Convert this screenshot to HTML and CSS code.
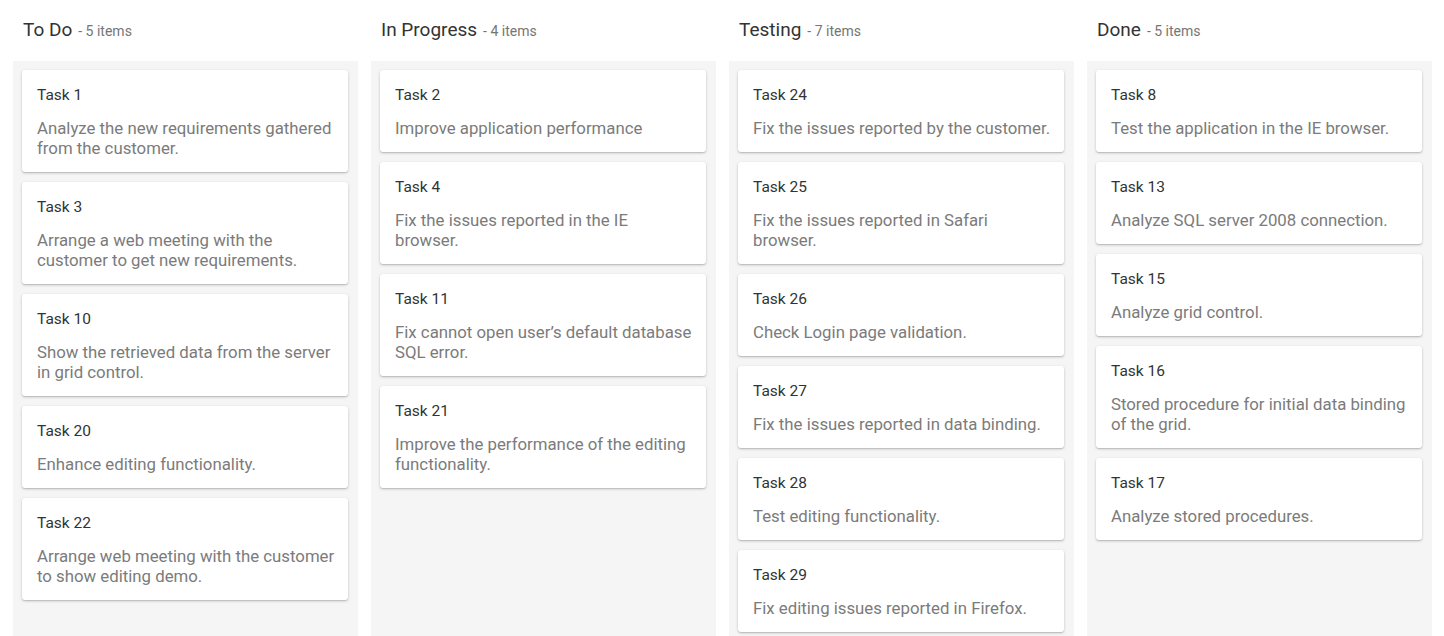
FILE: index.html
```html
<!doctype html>
<html lang="en">
<head>
	<meta charset="UTF-8">
	<title>Kanban board</title>
	<link rel="stylesheet" href="styles.css">
</head>
<body>
	<div class="board">
		<div class="lane">
			<div class="lane-head"><span class="lane-title">To Do</span><span class="lane-count">- 5 items</span></div>
			<div class="lane-body">
				<div class="card"><div class="card-title">Task 1</div><div class="card-text">Analyze the new requirements gathered from the customer.</div></div>
				<div class="card"><div class="card-title">Task 3</div><div class="card-text">Arrange a web meeting with the customer to get new requirements.</div></div>
				<div class="card"><div class="card-title">Task 10</div><div class="card-text">Show the retrieved data from the server in grid control.</div></div>
				<div class="card"><div class="card-title">Task 20</div><div class="card-text">Enhance editing functionality.</div></div>
				<div class="card"><div class="card-title">Task 22</div><div class="card-text">Arrange web meeting with the customer to show editing demo.</div></div>
			</div>
		</div>
		<div class="lane">
			<div class="lane-head"><span class="lane-title">In Progress</span><span class="lane-count">- 4 items</span></div>
			<div class="lane-body">
				<div class="card"><div class="card-title">Task 2</div><div class="card-text">Improve application performance</div></div>
				<div class="card"><div class="card-title">Task 4</div><div class="card-text">Fix the issues reported in the IE browser.</div></div>
				<div class="card"><div class="card-title">Task 11</div><div class="card-text">Fix cannot open user’s default database SQL error.</div></div>
				<div class="card"><div class="card-title">Task 21</div><div class="card-text">Improve the performance of the editing functionality.</div></div>
			</div>
		</div>
		<div class="lane">
			<div class="lane-head"><span class="lane-title">Testing</span><span class="lane-count">- 7 items</span></div>
			<div class="lane-body">
				<div class="card"><div class="card-title">Task 24</div><div class="card-text">Fix the issues reported by the customer.</div></div>
				<div class="card"><div class="card-title">Task 25</div><div class="card-text">Fix the issues reported in Safari browser.</div></div>
				<div class="card"><div class="card-title">Task 26</div><div class="card-text">Check Login page validation.</div></div>
				<div class="card"><div class="card-title">Task 27</div><div class="card-text">Fix the issues reported in data binding.</div></div>
				<div class="card"><div class="card-title">Task 28</div><div class="card-text">Test editing functionality.</div></div>
				<div class="card"><div class="card-title">Task 29</div><div class="card-text">Fix editing issues reported in Firefox.</div></div>
			</div>
		</div>
		<div class="lane">
			<div class="lane-head"><span class="lane-title">Done</span><span class="lane-count">- 5 items</span></div>
			<div class="lane-body">
				<div class="card"><div class="card-title">Task 8</div><div class="card-text">Test the application in the IE browser.</div></div>
				<div class="card"><div class="card-title">Task 13</div><div class="card-text">Analyze SQL server 2008 connection.</div></div>
				<div class="card"><div class="card-title">Task 15</div><div class="card-text">Analyze grid control.</div></div>
				<div class="card"><div class="card-title">Task 16</div><div class="card-text">Stored procedure for initial data binding of the grid.</div></div>
				<div class="card"><div class="card-title">Task 17</div><div class="card-text">Analyze stored procedures.</div></div>
			</div>
		</div>
	</div>
</body>
</html>
```
FILE: styles.css
```css
*{
	margin:0;
	padding:0;
	box-sizing:border-box;
}
body{
	font-family:Roboto, "Liberation Sans", sans-serif;
	background:#fff;
	color:#333;
}
.board{
	display:flex;
	gap:13px;
	padding:0 12px 0 13px;
}
.lane{
	flex:1;
	min-width:0;
	display:flex;
	flex-direction:column;
}
.lane-head{
	height:61px;
	padding:18px 0 0 10px;
	line-height:24px;
	white-space:nowrap;
}
.lane-title{
	font-size:19px;
	color:#333;
}
.lane-count{
	font-size:14px;
	color:#757575;
	margin-left:6px;
}
.lane-body{
	flex:1;
	background:#f5f5f5;
	padding:9px 10px 9px 9px;
	display:flex;
	flex-direction:column;
	gap:10px;
}
.card{
	background:#fff;
	border-radius:3px;
	box-shadow:0 1px 3px rgba(0,0,0,0.2), 0 1px 1px rgba(0,0,0,0.1);
	padding:15px 13px 14px 15px;
}
.card-title{
	font-size:15.5px;
	line-height:20px;
	color:#333;
}
.card-text{
	font-size:16.8px;
	line-height:20px;
	color:#7b7b7b;
	margin-top:13px;
}
```
